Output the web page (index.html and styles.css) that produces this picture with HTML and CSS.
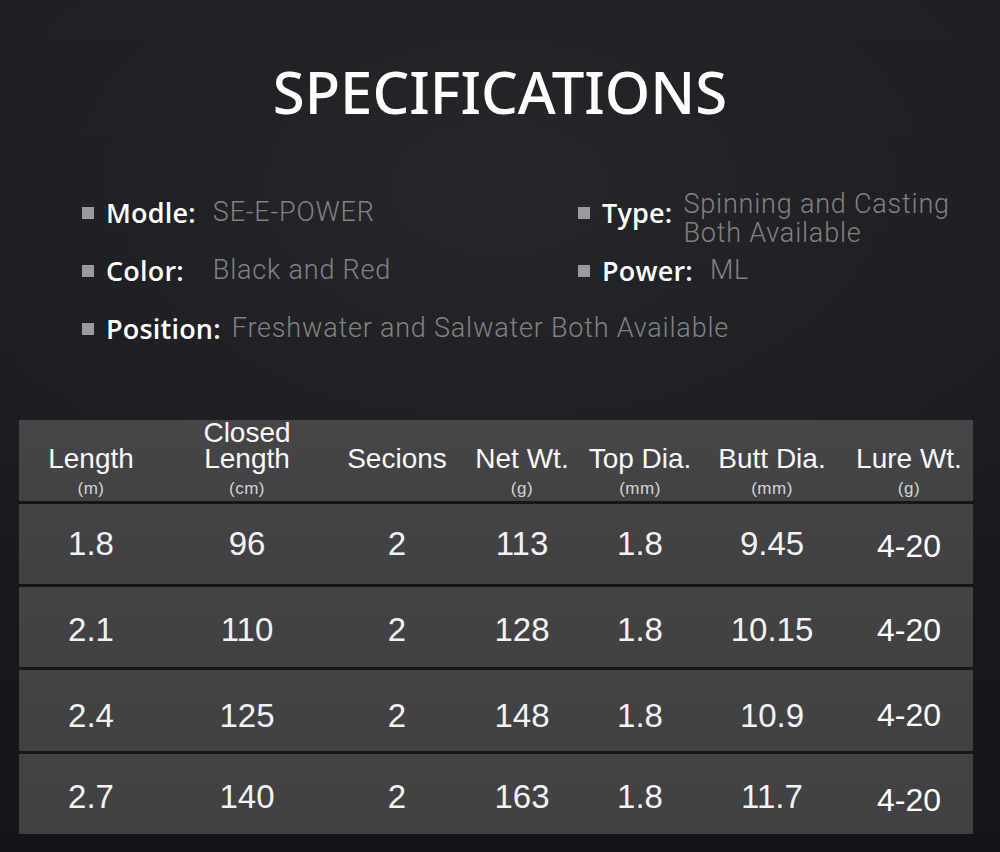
FILE: index.html
```html
<!DOCTYPE html>
<html lang="en">
<head>
<meta charset="utf-8">
<title>Specifications</title>
<link rel="stylesheet" href="styles.css">
</head>
<body>
<main class="page">
  <h1 class="title">SPECIFICATIONS</h1>

  <section class="specs">
    <div class="spec">
      <span class="bullet"></span>
      <span class="label">Modle:</span>
      <span class="value gap-md">SE-E-POWER</span>
    </div>
    <div class="spec">
      <span class="bullet"></span>
      <span class="label">Type:</span>
      <span class="value multi gap-sm">Spinning and Casting<br>Both Available</span>
    </div>
    <div class="spec">
      <span class="bullet"></span>
      <span class="label">Color:</span>
      <span class="value gap-lg">Black and Red</span>
    </div>
    <div class="spec">
      <span class="bullet"></span>
      <span class="label">Power:</span>
      <span class="value gap-md">ML</span>
    </div>
    <div class="spec span2">
      <span class="bullet"></span>
      <span class="label">Position:</span>
      <span class="value gap-sm">Freshwater and Salwater Both Available</span>
    </div>
  </section>

  <section class="table">
    <div class="row head">
      <div class="th"><span class="th-label">Length</span><span class="unit">(m)</span></div>
      <div class="th"><span class="th-label">Closed<br>Length</span><span class="unit">(cm)</span></div>
      <div class="th"><span class="th-label">Secions</span><span class="unit">&nbsp;</span></div>
      <div class="th"><span class="th-label">Net Wt.</span><span class="unit">(g)</span></div>
      <div class="th"><span class="th-label">Top Dia.</span><span class="unit">(mm)</span></div>
      <div class="th"><span class="th-label">Butt Dia.</span><span class="unit">(mm)</span></div>
      <div class="th"><span class="th-label">Lure Wt.</span><span class="unit">(g)</span></div>
    </div>
    <div class="row r1">
      <div class="td">1.8</div><div class="td">96</div><div class="td">2</div><div class="td">113</div><div class="td">1.8</div><div class="td">9.45</div><div class="td lure">4-20</div>
    </div>
    <div class="row r2">
      <div class="td">2.1</div><div class="td">110</div><div class="td">2</div><div class="td">128</div><div class="td">1.8</div><div class="td">10.15</div><div class="td lure">4-20</div>
    </div>
    <div class="row r3">
      <div class="td">2.4</div><div class="td">125</div><div class="td">2</div><div class="td">148</div><div class="td">1.8</div><div class="td">10.9</div><div class="td lure">4-20</div>
    </div>
    <div class="row r4">
      <div class="td">2.7</div><div class="td">140</div><div class="td">2</div><div class="td">163</div><div class="td">1.8</div><div class="td">11.7</div><div class="td lure">4-20</div>
    </div>
  </section>
</main>
</body>
</html>
```

FILE: styles.css
```css
html, body {
  margin: 0;
  padding: 0;
}

body {
  width: 1000px;
  height: 852px;
  overflow: hidden;
  background: #151619;
}

.page {
  width: 1000px;
  height: 852px;
  box-sizing: border-box;
  padding-top: 57px;
  background:
    radial-gradient(ellipse 75% 55% at 50% 22%, #26272a 0%, #202124 45%, rgba(24,25,28,0) 100%),
    linear-gradient(180deg, #1f2023 0%, #1b1c1f 45%, #141518 100%);
}

.title {
  margin: 0;
  font-family: "Noto Sans", "Open Sans", sans-serif;
  font-weight: 500;
  font-size: 58px;
  line-height: 70px;
  height: 70px;
  color: #ffffff;
  text-align: center;
  letter-spacing: 0;
}

.specs {
  margin-top: 56px;
  padding-left: 82px;
  display: grid;
  grid-template-columns: 496px 1fr;
  grid-auto-rows: 58px;
}

.spec {
  display: flex;
  align-items: center;
}

.span2 {
  grid-column: 1 / 3;
}

.bullet {
  width: 12px;
  height: 12px;
  background: #9a9a9c;
  margin-right: 12px;
  margin-top: 1px;
  flex: none;
}

.label {
  font-family: "Open Sans", "Noto Sans", sans-serif;
  font-weight: 600;
  font-size: 27px;
  line-height: 29px;
  color: #ffffff;
  letter-spacing: 0.2px;
  white-space: nowrap;
}

.value {
  font-family: Roboto, "Liberation Sans", sans-serif;
  font-weight: 300;
  font-size: 27px;
  line-height: 29px;
  color: #828282;
  white-space: nowrap;
  letter-spacing: 0.8px;
}

.gap-sm { margin-left: 11px; }
.gap-md { margin-left: 17px; }
.gap-lg { margin-left: 29px; }

.value.multi {
  margin-top: 14px;
}

.table {
  margin-top: 63px;
  margin-left: 19px;
  width: 954px;
  display: flex;
  flex-direction: column;
  gap: 3px;
  background: #161619;
}

.row {
  display: grid;
  grid-template-columns: 144px 168px 132px 118px 118px 146px 128px;
  height: 80px;
  background: linear-gradient(180deg, #434346 0%, #414144 100%);
}

.row.head {
  height: 81px;
  background: linear-gradient(180deg, #464649 0%, #424245 100%);
}

.row.r3 {
  height: 81px;
}

.th {
  display: flex;
  flex-direction: column;
  justify-content: flex-end;
  align-items: center;
  padding-bottom: 3px;
  text-align: center;
  font-family: "Liberation Sans", Arial, sans-serif;
  color: #f7f7f7;
}

.th-label {
  font-size: 28px;
  line-height: 26px;
}

.unit {
  margin-top: 7px;
  font-size: 17px;
  line-height: 19px;
  color: #d4d4d4;
  letter-spacing: 0.5px;
}

.td {
  display: flex;
  align-items: center;
  justify-content: center;
  font-family: "Liberation Sans", Arial, sans-serif;
  font-size: 33px;
  color: #f2f2f2;
}

.r2 .td { padding-top: 6px; }
.r3 .td { padding-top: 10px; }
.r4 .td { padding-top: 6px; }

.td.lure {
  font-size: 32px;
  color: #ffffff;
}

.r1 .td.lure { padding-top: 4px; }
.r4 .td.lure { padding-top: 12px; }
```
